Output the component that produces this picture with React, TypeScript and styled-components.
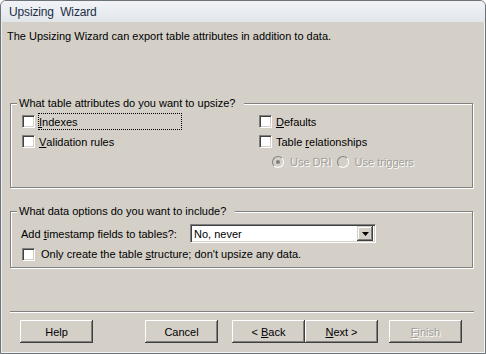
import React from "react";
import styled, { createGlobalStyle } from "styled-components";

const Global = createGlobalStyle`
  html, body { margin: 0; padding: 0; background: #ffffff; }
  * { box-sizing: border-box; }
`;

const FONT = `"Liberation Sans", Arial, sans-serif`;
const FACE = "#d4d0c8";

const Window = styled.div`
  width: 486px;
  height: 354px;
  border: 1px solid #6d7479;
  border-radius: 6px 6px 0 0;
  background: ${FACE};
  display: flex;
  flex-direction: column;
  overflow: hidden;
  font-family: ${FONT};
  font-size: 11px;
  color: #000;
`;

const TitleBar = styled.div`
  height: 21px;
  flex: none;
  display: flex;
  align-items: center;
  padding-left: 8px;
  background: linear-gradient(#f1f3f7, #e2e6eb);
  color: #1c2e45;
  font-size: 12px;
  letter-spacing: -0.15px;
  white-space: pre;
`;

const Client = styled.div`
  flex: 1;
  display: flex;
  flex-direction: column;
  padding: 8px 12px 0 9px;
  box-shadow: inset 1px 0 0 #eeeeee, inset -1px 0 0 #f4f4f4, inset 0 -1px 0 #f4f4f4;
`;

const Intro = styled.div`
  line-height: 13px;
  margin-left: -3px;
`;

const Group = styled.fieldset<{ $top: number }>`
  margin: ${(p) => p.$top}px 0 0 0;
  padding: 0;
  border: 1px solid #808080;
  box-shadow: inset 1px 1px 0 #ffffff, 1px 1px 0 #ffffff;
  min-width: 0;
`;

const Legend = styled.legend`
  margin-left: 6px;
  padding: 0 9px 0 2px;
  line-height: 13px;
  background: ${FACE};
`;

const GroupBody = styled.div<{ $pt: number; $pb: number; $pl: number }>`
  padding: ${(p) => p.$pt}px 0 ${(p) => p.$pb}px ${(p) => p.$pl}px;
`;

const AttrGrid = styled.div`
  display: grid;
  grid-template-columns: 237px 1fr;
  row-gap: 3px;
`;

const Row = styled.div<{ $indent?: number; $gap?: number }>`
  display: flex;
  align-items: center;
  height: 17px;
  margin-left: ${(p) => p.$indent ?? 0}px;
  gap: ${(p) => p.$gap ?? 3}px;
`;

const Check = styled.span`
  width: 13px;
  height: 13px;
  flex: none;
  background: #ffffff;
  border-style: solid;
  border-width: 1px;
  border-color: #808080 #ffffff #ffffff #808080;
  box-shadow: inset 1px 1px 0 #404040, inset -1px -1px 0 ${FACE};
`;

const Label = styled.span<{ $focus?: boolean; $w?: number; $disabled?: boolean }>`
  display: inline-flex;
  align-items: center;
  height: 17px;
  padding-left: 1px;
  width: ${(p) => (p.$w ? `${p.$w}px` : "auto")};
  outline: ${(p) => (p.$focus ? "1px dotted #000" : "none")};
  outline-offset: -1px;
  color: ${(p) => (p.$disabled ? "#a09d97" : "#000")};
  text-shadow: ${(p) => (p.$disabled ? "1px 1px 0 #ffffff" : "none")};
  white-space: pre;
`;

const Radio = styled.span<{ $on?: boolean }>`
  width: 12px;
  height: 12px;
  flex: none;
  border-radius: 50%;
  border: 1px solid;
  border-color: #808080 #ffffff #ffffff #808080;
  background: ${FACE};
  display: flex;
  align-items: center;
  justify-content: center;
  &::after {
    content: "";
    width: 4px;
    height: 4px;
    border-radius: 50%;
    background: ${(p) => (p.$on ? "#808080" : "transparent")};
  }
`;

const RadioGroup = styled.div`
  display: flex;
  align-items: center;
  gap: 5px;
  margin-left: 13px;
  height: 17px;
`;

const RadioItem = styled.span`
  display: inline-flex;
  align-items: center;
  gap: 5px;
`;

const DataRow = styled.div<{ $h: number; $mt?: number }>`
  display: flex;
  align-items: center;
  height: ${(p) => p.$h}px;
  margin-top: ${(p) => p.$mt ?? 0}px;
`;

const FieldLabel = styled.span`
  width: 169px;
  flex: none;
`;

const Select = styled.div`
  width: 186px;
  height: 19px;
  display: flex;
  align-items: center;
  background: #ffffff;
  border-style: solid;
  border-width: 1px;
  border-color: #808080 #ffffff #ffffff #808080;
  box-shadow: inset 1px 1px 0 #404040, inset -1px -1px 0 ${FACE};
  padding: 2px 2px 2px 3px;
`;

const SelectText = styled.span`
  flex: 1;
`;

const DropButton = styled.span`
  width: 16px;
  height: 15px;
  flex: none;
  background: ${FACE};
  box-shadow: inset -1px -1px 0 #404040, inset 1px 1px 0 ${FACE},
    inset -2px -2px 0 #808080, inset 2px 2px 0 #ffffff;
  display: flex;
  align-items: center;
  justify-content: center;
`;

const Separator = styled.div`
  margin-top: 43px;
  height: 2px;
  border-top: 1px solid #808080;
  border-bottom: 1px solid #ffffff;
  margin-right: -1px;
`;

const ButtonRow = styled.div`
  display: flex;
  margin-top: 7px;
  padding-left: 10px;
`;

const Button = styled.button<{ $before?: number; $disabled?: boolean }>`
  width: 73px;
  height: 23px;
  margin: 0 0 0 ${(p) => p.$before ?? 0}px;
  padding: 0;
  border: none;
  background: ${FACE};
  font-family: ${FONT};
  font-size: 11px;
  color: ${(p) => (p.$disabled ? "#a09d97" : "#000")};
  text-shadow: ${(p) => (p.$disabled ? "1px 1px 0 #ffffff" : "none")};
  box-shadow: inset -1px -1px 0 #404040, inset 1px 1px 0 #ffffff,
    inset -2px -2px 0 #808080, inset 2px 2px 0 ${FACE};
`;

const Acc = styled.span`
  text-decoration: underline;
`;

export default function App() {
  return (
    <>
      <Global />
      <Window>
        <TitleBar>Upsizing  Wizard</TitleBar>
        <Client>
          <Intro>The Upsizing Wizard can export table attributes in addition to data.</Intro>

          <Group $top={54}>
            <Legend>What table attributes do you want to upsize?</Legend>
            <GroupBody $pt={3} $pb={17} $pl={11}>
              <AttrGrid>
                <Row>
                  <Check />
                  <Label $focus $w={144}>
                    <Acc>I</Acc>ndexes
                  </Label>
                </Row>
                <Row>
                  <Check />
                  <Label>
                    <Acc>D</Acc>efaults
                  </Label>
                </Row>
                <Row>
                  <Check />
                  <Label>
                    <Acc>V</Acc>alidation rules
                  </Label>
                </Row>
                <Row>
                  <Check />
                  <Label>
                    Table <Acc>r</Acc>elationships
                  </Label>
                </Row>
                <div />
                <RadioGroup>
                  <RadioItem>
                    <Radio $on />
                    <Label $disabled>Use DRI</Label>
                  </RadioItem>
                  <RadioItem>
                    <Radio />
                    <Label $disabled>Use triggers</Label>
                  </RadioItem>
                </RadioGroup>
              </AttrGrid>
            </GroupBody>
          </Group>

          <Group $top={17}>
            <Legend>What data options do you want to include?</Legend>
            <GroupBody $pt={6} $pb={5} $pl={10}>
              <DataRow $h={19}>
                <FieldLabel>
                  Add <Acc>t</Acc>imestamp fields to tables?:
                </FieldLabel>
                <Select>
                  <SelectText>No, never</SelectText>
                  <DropButton>
                    <svg width="7" height="4" viewBox="0 0 7 4">
                      <path d="M0 0h7L3.5 4z" fill="#000" />
                    </svg>
                  </DropButton>
                </Select>
              </DataRow>
              <DataRow $h={16} $mt={3}>
                <Row $indent={1} $gap={5}>
                  <Check />
                  <Label>
                    Only create the table <Acc>s</Acc>tructure; don't upsize any data.
                  </Label>
                </Row>
              </DataRow>
            </GroupBody>
          </Group>

          <Separator />

          <ButtonRow>
            <Button>Help</Button>
            <Button $before={52}>Cancel</Button>
            <Button $before={14}>
              &lt; <Acc>B</Acc>ack
            </Button>
            <Button>
              <Acc>N</Acc>ext &gt;
            </Button>
            <Button $before={11} $disabled>
              <Acc>F</Acc>inish
            </Button>
          </ButtonRow>
        </Client>
      </Window>
    </>
  );
}
